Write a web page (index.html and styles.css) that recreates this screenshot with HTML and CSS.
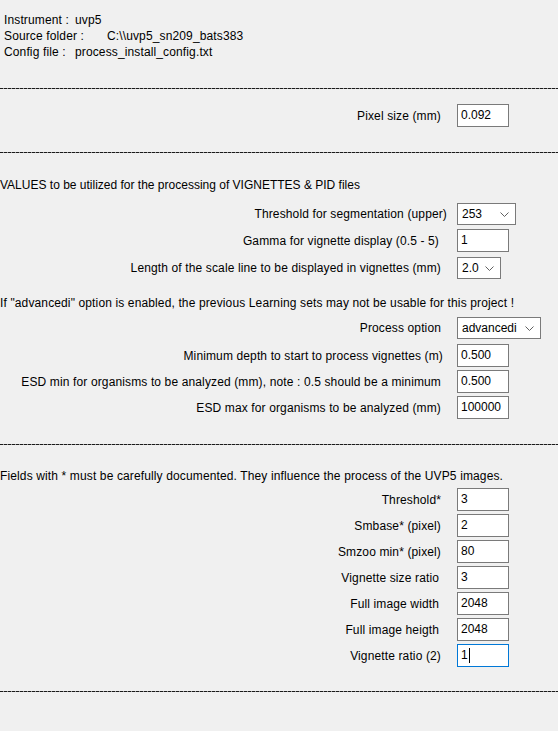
FILE: index.html
```html
<!DOCTYPE html>
<html>
<head>
<meta charset="utf-8">
<link rel="stylesheet" href="styles.css">
</head>
<body>
<div class="header">
  <div class="hl"><span class="k">Instrument :</span><span>uvp5</span></div>
  <div class="hl"><span class="k k-wide">Source folder :</span><span>C:\\uvp5_sn209_bats383</span></div>
  <div class="hl"><span class="k">Config file :</span><span>process_install_config.txt</span></div>
</div>

<div class="sep sep-1"></div>

<div class="row r-pixel">
  <div class="lbl">Pixel size (mm)</div>
  <div class="field">0.092</div>
</div>

<div class="sep sep-2"></div>

<div class="note n-values">VALUES to be utilized for the processing of VIGNETTES &amp; PID files</div>

<div class="row r-thr">
  <div class="lbl lbl-shift">Threshold for segmentation (upper)</div>
  <div class="select s-253"><span>253</span><svg class="chev" width="9" height="5" viewBox="0 0 9 5"><polyline points="0.5,0.5 4.5,4.5 8.5,0.5" fill="none" stroke="#606060" stroke-width="1"/></svg></div>
</div>
<div class="row r-gamma">
  <div class="lbl lbl-left">Gamma for vignette display (0.5 - 5)</div>
  <div class="field">1</div>
</div>
<div class="row r-len">
  <div class="lbl">Length of the scale line to be displayed in vignettes (mm)</div>
  <div class="select s-20"><span>2.0</span><svg class="chev" width="9" height="5" viewBox="0 0 9 5"><polyline points="0.5,0.5 4.5,4.5 8.5,0.5" fill="none" stroke="#606060" stroke-width="1"/></svg></div>
</div>

<div class="note n-adv">If "advancedi" option is enabled, the previous Learning sets may not be usable for this project !</div>

<div class="row r-proc">
  <div class="lbl">Process option</div>
  <div class="select s-adv"><span>advancedi</span><svg class="chev" width="9" height="5" viewBox="0 0 9 5"><polyline points="0.5,0.5 4.5,4.5 8.5,0.5" fill="none" stroke="#606060" stroke-width="1"/></svg></div>
</div>
<div class="row r-depth">
  <div class="lbl lbl-shift2">Minimum depth to start to process vignettes (m)</div>
  <div class="field">0.500</div>
</div>
<div class="row">
  <div class="lbl">ESD min for organisms to be analyzed (mm), note : 0.5 should be a minimum</div>
  <div class="field">0.500</div>
</div>
<div class="row">
  <div class="lbl">ESD max for organisms to be analyzed (mm)</div>
  <div class="field">100000</div>
</div>

<div class="sep sep-3"></div>

<div class="note n-fields">Fields with * must be carefully documented. They influence the process of the UVP5 images.</div>

<div class="row r-first">
  <div class="lbl">Threshold*</div>
  <div class="field">3</div>
</div>
<div class="row">
  <div class="lbl">Smbase* (pixel)</div>
  <div class="field">2</div>
</div>
<div class="row">
  <div class="lbl">Smzoo min* (pixel)</div>
  <div class="field">80</div>
</div>
<div class="row">
  <div class="lbl lbl-left">Vignette size ratio</div>
  <div class="field">3</div>
</div>
<div class="row">
  <div class="lbl lbl-left">Full image width</div>
  <div class="field">2048</div>
</div>
<div class="row">
  <div class="lbl lbl-left">Full image heigth</div>
  <div class="field">2048</div>
</div>
<div class="row">
  <div class="lbl">Vignette ratio (2)</div>
  <div class="field field-focus">1<span class="caret"></span></div>
</div>

<div class="sep sep-4"></div>
</body>
</html>
```

FILE: styles.css
```css
html, body {
  margin: 0;
  padding: 0;
  background: #f0f0f0;
}
body {
  font-family: "Liberation Sans", Arial, sans-serif;
  font-size: 12px;
  letter-spacing: 0.13px;
  color: #000;
  width: 558px;
  height: 731px;
  overflow: hidden;
}
.header {
  padding: 12px 0 0 4px;
  line-height: 16px;
}
.hl {
  white-space: nowrap;
}
.k {
  display: inline-block;
  width: 71px;
}
.k-wide {
  width: 103px;
}
.sep {
  height: 1px;
  background: repeating-linear-gradient(to right, #1a1a1a 0 3px, #9a9a9a 3px 4px);
}
.sep-1 { margin-top: 28px; }
.sep-2 { margin-top: 25px; }
.sep-3 { margin-top: 25px; }
.sep-4 { margin-top: 24px; }

.note {
  line-height: 16px;
  white-space: nowrap;
}
.n-values { margin-top: 24px; letter-spacing: 0; }
.n-adv { margin-top: 16px; }
.n-fields { margin-top: 23px; }

.row {
  display: grid;
  grid-template-columns: 441px auto;
  column-gap: 16px;
  align-items: center;
  margin-top: 3px;
}
.r-pixel { margin-top: 15px; }
.r-thr { margin-top: 10px; }
.r-gamma { margin-top: 4px; }
.r-len { margin-top: 5px; }
.r-proc { margin-top: 6px; }
.r-depth { margin-top: 5px; }
.r-first { margin-top: 4px; }

.lbl {
  text-align: right;
  white-space: nowrap;
}
.lbl-shift { margin-right: -6px; }
.lbl-shift2 { margin-right: -2px; }
.lbl-left { margin-right: 2px; }

.field {
  box-sizing: border-box;
  width: 52px;
  height: 23px;
  border: 1px solid #7a7a7a;
  background: #fff;
  padding: 3px 0 0 3px;
  line-height: 15px;
  letter-spacing: 0;
  white-space: nowrap;
}
.field-focus {
  border-color: #0078d7;
}
.caret {
  display: inline-block;
  width: 1px;
  height: 15px;
  background: #000;
  vertical-align: top;
  margin-left: 1px;
}
.select {
  box-sizing: border-box;
  height: 22px;
  border: 1px solid #7a7a7a;
  background: #fff;
  display: flex;
  align-items: center;
  justify-content: space-between;
  padding: 0 6px 0 4px;
  letter-spacing: 0;
  white-space: nowrap;
}
.s-253 { width: 59px; }
.s-20 { width: 44px; }
.s-adv { width: 84px; }
.chev {
  display: block;
  margin-top: 1px;
}
```
